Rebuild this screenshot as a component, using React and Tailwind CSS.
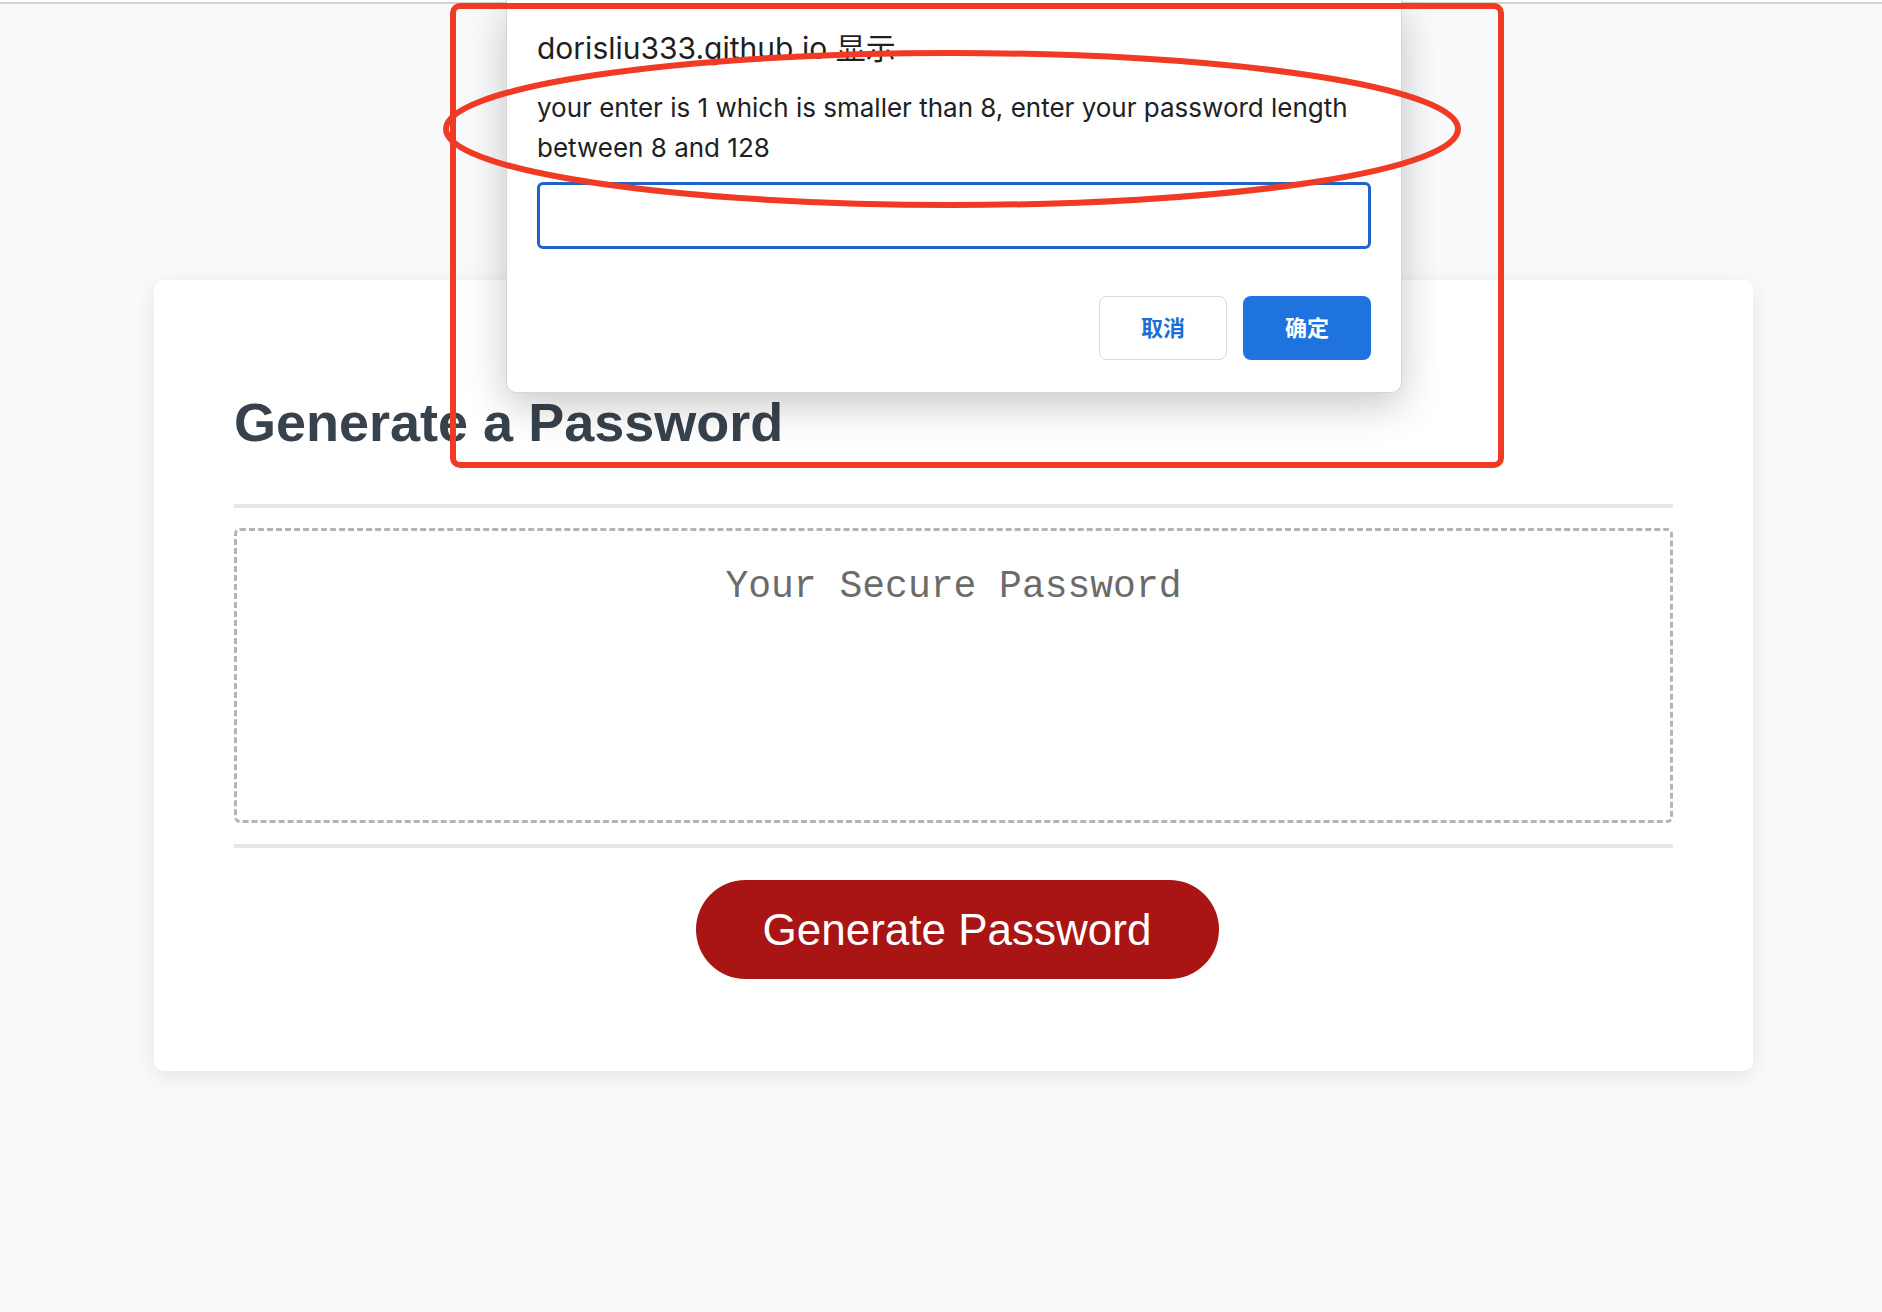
import React from 'react';

// Diálogo de prompt del navegador sobre la tarjeta del generador
function PromptDialog() {
  return (
    <div
      className="absolute left-[506px] top-0 w-[896px] bg-white rounded-b-[10px] border border-t-0 border-[#d6d6d6] shadow-[0_12px_40px_rgba(0,0,0,0.22)] px-[30px] pt-[31px] pb-[32px] z-20"
      style={{ fontFamily: 'Inter, "Noto Sans CJK SC", sans-serif' }}
    >
      <div className="text-[30px] leading-[34px] text-[#1f1f1f]">dorisliu333.github.io 显示</div>
      <p className="mt-[23px] text-[26px] leading-[40px] text-[#202124]">
        your enter is 1 which is smaller than 8, enter your password length between 8 and 128
      </p>
      <input
        className="mt-[14px] block w-full h-[67px] rounded-[6px] border-[3px] border-[#1f64c8] outline-none px-3 text-[24px]"
        defaultValue=""
      />
      <div className="mt-[47px] flex justify-end gap-[16px]">
        <button className="w-[128px] h-[64px] rounded-[8px] border border-[#dadada] bg-white text-[#1b6fd6] text-[22px] font-bold">
          取消
        </button>
        <button className="w-[128px] h-[64px] rounded-[8px] bg-[#1f73de] text-white text-[22px] font-bold">
          确定
        </button>
      </div>
    </div>
  );
}

export default function App() {
  return (
    <div
      className="relative min-h-screen bg-[#f9fafb] overflow-hidden"
      style={{ fontFamily: '"Liberation Sans", Arial, sans-serif' }}
    >
      {/* borde superior de la ventana */}
      <div className="h-[2px] bg-white" />
      <div className="h-[2px] bg-[#d2d2d2]" />

      <main className="pt-[276px] pl-[154px] pr-[129px] pb-[200px]">
        <section className="bg-white rounded-[10px] shadow-[0_6px_24px_rgba(0,0,0,0.09)] px-[80px] pt-[115px] pb-[92px]">
          <h2 className="text-[54px] leading-none font-bold text-[#37424d]">Generate a Password</h2>
          <div className="mt-[55px] h-[4px] bg-[#e7e7e7]" />
          <textarea
            readOnly
            placeholder="Your Secure Password"
            className="mt-[20px] block w-full h-[295px] resize-none rounded-[6px] border-[3px] border-dashed border-[#b0b4bc] bg-white text-center pt-[34px] text-[38px] leading-[43px] placeholder:text-[#6b6b6b] outline-none"
            style={{ fontFamily: '"Liberation Mono", "Courier New", monospace' }}
          />
          <div className="mt-[21px] h-[4px] bg-[#e7e7e7]" />
          <div className="mt-[32px] flex justify-center">
            <button className="w-[523px] h-[99px] rounded-full bg-[#a91515] text-white text-[44px] ml-[7px]">
              Generate Password
            </button>
          </div>
        </section>
      </main>

      <PromptDialog />

      {/* anotaciones rojas */}
      <div className="absolute left-[450px] top-[3px] w-[1054px] h-[465px] rounded-[10px] border-[6px] border-[#f03a24] z-30 pointer-events-none" />
      <svg className="absolute left-0 top-0 z-30 pointer-events-none" width="1882" height="300">
        <ellipse cx="952" cy="129" rx="506" ry="76" fill="none" stroke="#f03a24" strokeWidth="6" />
      </svg>
    </div>
  );
}
